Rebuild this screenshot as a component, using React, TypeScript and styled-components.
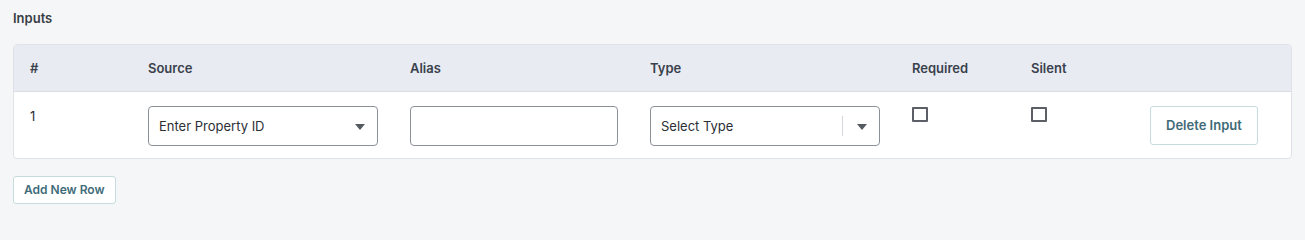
import React from 'react'
import styled, { createGlobalStyle } from 'styled-components'

const GlobalStyle = createGlobalStyle`
  html, body {
    margin: 0;
    padding: 0;
    background: #f5f6f8;
  }
  body {
    font-family: Inter, 'Noto Sans', sans-serif;
    -webkit-font-smoothing: antialiased;
  }
`

const Page = styled.div`
  padding: 10px 13px 13px;
  width: 1279px;
`

const Heading = styled.h3`
  margin: 0 0 17px;
  font-size: 13px;
  line-height: 17px;
  font-weight: 600;
  color: #393e46;
`

const TableBox = styled.div`
  border: 1px solid #dfe3e8;
  border-radius: 4px;
  background: #fff;
  overflow: hidden;
`

const Table = styled.table`
  width: 100%;
  border-collapse: collapse;
  table-layout: fixed;
`

const HeadCell = styled.th<{ $w?: number }>`
  width: ${(p) => (p.$w ? `${p.$w}px` : 'auto')};
  height: 46px;
  padding: 0 16px;
  background: #e8ecf2;
  border-bottom: 1px solid #d9dee5;
  text-align: left;
  font-size: 13px;
  font-weight: 600;
  color: #3a414d;
  box-sizing: border-box;
`

const Cell = styled.td`
  vertical-align: top;
  padding: 14px 16px 12px;
  font-size: 13px;
  line-height: 20px;
  color: #2b2f36;
`

const Field = styled.div`
  display: flex;
  align-items: center;
  height: 40px;
  box-sizing: border-box;
  border: 1px solid #8c9199;
  border-radius: 4px;
  background: #fff;
  padding: 0 10px;
  font-size: 13px;
  color: #2b2f36;
`

const FieldText = styled.span`
  flex: 1;
`

const Separator = styled.span`
  width: 1px;
  height: 20px;
  background: #d4d7db;
  margin-right: 14px;
`

const Caret = styled.span`
  width: 0;
  height: 0;
  border-left: 5px solid transparent;
  border-right: 5px solid transparent;
  border-top: 6px solid #555a61;
  margin-right: 2px;
  margin-top: 2px;
`

const Box = styled.span`
  display: block;
  width: 16px;
  height: 15px;
  box-sizing: border-box;
  border: 2px solid #5c6066;
  border-radius: 1px;
  margin-top: 1px;
`

const Button = styled.button<{ $small?: boolean }>`
  height: ${(p) => (p.$small ? 28 : 39)}px;
  padding: 0 ${(p) => (p.$small ? 10 : 15)}px;
  border: 1px solid #c6dbde;
  border-radius: 3px;
  background: #fff;
  font-family: Inter, 'Noto Sans', sans-serif;
  font-size: ${(p) => (p.$small ? 12 : 13)}px;
  font-weight: 600;
  color: #3f6b79;
  cursor: pointer;
`

const Footer = styled.div`
  margin-top: 17px;
`

export default function App() {
  return (
    <>
      <GlobalStyle />
      <Page>
        <Heading>Inputs</Heading>
        <TableBox>
          <Table>
            <thead>
              <tr>
                <HeadCell $w={118}>#</HeadCell>
                <HeadCell $w={262}>Source</HeadCell>
                <HeadCell $w={240}>Alias</HeadCell>
                <HeadCell $w={262}>Type</HeadCell>
                <HeadCell $w={119}>Required</HeadCell>
                <HeadCell $w={119}>Silent</HeadCell>
                <HeadCell />
              </tr>
            </thead>
            <tbody>
              <tr>
                <Cell>1</Cell>
                <Cell>
                  <Field>
                    <FieldText>Enter Property ID</FieldText>
                    <Caret />
                  </Field>
                </Cell>
                <Cell>
                  <Field />
                </Cell>
                <Cell>
                  <Field>
                    <FieldText>Select Type</FieldText>
                    <Separator />
                    <Caret />
                  </Field>
                </Cell>
                <Cell>
                  <Box />
                </Cell>
                <Cell>
                  <Box />
                </Cell>
                <Cell>
                  <Button>Delete Input</Button>
                </Cell>
              </tr>
            </tbody>
          </Table>
        </TableBox>
        <Footer>
          <Button $small>Add New Row</Button>
        </Footer>
      </Page>
    </>
  )
}
